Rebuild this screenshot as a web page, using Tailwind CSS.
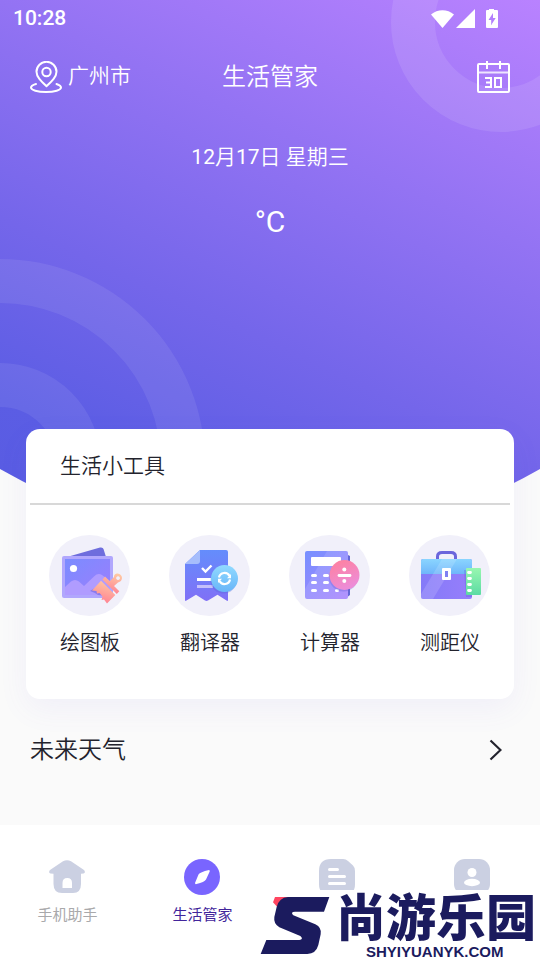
<!DOCTYPE html>
<html lang="zh-CN">
<head>
    <meta charset="UTF-8">
    <meta name="viewport" content="width=device-width, initial-scale=1.0">
    <title>生活管家</title>
    <script src="https://cdn.jsdelivr.net/npm/@tailwindcss/browser@4"></script>
</head>
<body class="relative flex flex-col min-h-screen bg-[#fafafa] font-[Roboto,'Noto_Sans_CJK_SC',sans-serif] font-[350] text-[#23232d]">

    <!-- Hero background -->
    <svg class="absolute inset-x-0 top-0 -z-0 w-full h-[546px]" viewBox="0 0 540 546" preserveAspectRatio="none" aria-hidden="true">
        <defs>
            <linearGradient id="sky" gradientUnits="userSpaceOnUse" x1="540" y1="0" x2="266" y2="592">
                <stop offset="0" stop-color="#b982ff"/>
                <stop offset=".35" stop-color="#9373f3"/>
                <stop offset=".65" stop-color="#7466ea"/>
                <stop offset=".9" stop-color="#5b5de4"/>
                <stop offset="1" stop-color="#595ce3"/>
            </linearGradient>
            <clipPath id="dome"><path d="M0 0H540V469Q270 622 0 469Z"/></clipPath>
        </defs>
        <g clip-path="url(#dome)">
            <rect width="540" height="546" fill="url(#sky)"/>
            <g fill="none" stroke="#fff" stroke-width="44">
                <circle cx="501" cy="22" r="88" stroke-opacity=".1"/>
                <circle cx="0" cy="464" r="183" stroke-opacity=".08"/>
                <circle cx="0" cy="464" r="79" stroke-opacity=".08"/>
            </g>
        </g>
    </svg>

    <div class="relative flex flex-col flex-1">
        <!-- Status bar -->
        <div class="flex items-center justify-between h-[37px] pl-[13px] pr-[42px] text-white">
            <span class="text-[21px] font-medium">10:28</span>
            <svg class="w-[68px] h-5" viewBox="0 0 68 20" fill="#fff" aria-hidden="true">
                <path d="M1 5.500C7.500-.3 17.500-.3 24 5.500L12.500 19Z"/>
                <path d="M45 0V19H26Z"/>
                <path fill-rule="evenodd" d="M59-1h5v2h3q1 0 1 1v16q0 1-1 1H57q-1 0-1-1V2q0-1 1-1h2ZM63 4l-4.500 7h2.700v5l4.500-7H63Z"/>
            </svg>
        </div>

        <!-- Header -->
        <header class="grid grid-cols-3 items-center h-20 px-[30px] text-white">
            <button type="button" class="flex items-center gap-1.5 text-[21px]">
                <svg class="w-8 h-8 shrink-0" viewBox="0 0 32 32" fill="none" stroke="#fff" stroke-width="2" stroke-linecap="round" aria-hidden="true">
                    <path d="M16.500 25.200C11 20 6.500 15.800 6.500 10.800a10 10 0 0 1 20 0C26.500 15.800 22 20 16.500 25.200Z" stroke-linejoin="round"/>
                    <circle cx="16.500" cy="11" r="4.200"/>
                    <path d="M6 23C2.500 24 1 25 1 26.500 1 29 7.500 31 16 31s15-2 15-4.500C31 25 29.500 24 26.500 23"/>
                </svg>
                广州市
            </button>
            <h1 class="text-2xl text-center">生活管家</h1>
            <button type="button" class="justify-self-end" aria-label="日历">
                <svg class="w-[34px] h-[34px]" viewBox="0 0 34 34" fill="none" stroke="#fff" stroke-width="2" aria-hidden="true">
                    <rect x="2" y="4" width="31" height="28" rx="1"/>
                    <path d="M2 12.500H33" stroke-opacity=".8"/>
                    <path d="M11 1V9M24 1V9"/>
                    <path d="M9 18H15V27H9M10 22.500H15M19 18H25V27H19Z"/>
                </svg>
            </button>
        </header>

        <p class="mt-[25px] text-[21px] leading-[30px] text-center text-white"><span class="font-normal">12</span>月<span class="font-normal">17</span>日 星期三</p>
        <p class="mt-[30px] text-[30px] leading-10 text-center text-white font-normal">°C</p>

        <!-- Tools card -->
        <section class="mt-[187px] mx-[26px] px-1 pb-[42px] rounded-[14px] bg-white shadow-[0_10px_30px_rgba(110,100,230,0.07)]">
            <h2 class="h-[76px] pl-[30px] border-b-2 border-[#d8d8d8] text-[21px] leading-[74px]">生活小工具</h2>
            <div class="grid grid-cols-4 pt-[30px] text-xl">
                <a href="#" class="flex flex-col items-center gap-3">
                    <svg class="w-[82px] h-[82px]" viewBox="19 15 82 82" aria-hidden="true">
                        <defs>
                            <linearGradient id="photo" x1="0" y1="0" x2="1" y2="1"><stop stop-color="#7b8cff"/><stop offset="1" stop-color="#9c7dfd"/></linearGradient>
                            <linearGradient id="brush" x1=".7" y1="0" x2=".4" y2="1"><stop stop-color="#ffc9a3"/><stop offset="1" stop-color="#ff7f92"/></linearGradient>
                        </defs>
                        <circle cx="59.500" cy="55.500" r="40.500" fill="#f1f0fa"/>
                        <path d="M37 37 70 27.500Q73 27 73.500 29L76 37Z" fill="#6e6ddd"/>
                        <rect x="32" y="36" width="51" height="42" rx="2" fill="#b1a7fd"/>
                        <rect x="35" y="39" width="45" height="36" fill="url(#photo)"/>
                        <path d="M35 67 41 61.500Q45 58.500 49 61.500L54 66 64 56.500Q68 52.500 72 55L80 61V75H35Z" fill="#b09cff"/>
                        <circle cx="43.500" cy="48.500" r="3.600" fill="#fff"/>
                        <path d="M60 71 68 66 75 76 68 75 65 73Z" fill="#6b61db" opacity=".55"/>
                        <g fill="url(#brush)">
                            <path fill-rule="evenodd" d="M75 56.500 79.800 61.200 84 57Q84 53.500 87.500 53.500 91.800 54 92 58 91.800 61.500 88 62.500L84 66 89.300 71.300 86.800 74 72.500 59.500ZM88 56.200a1.900 1.900 0 1 0 .1 0Z"/>
                            <path d="M71 60.800 85.300 75 77 83.500 74 79.500 71.500 80 72.500 76.500 69.500 73 67 73.500 66.500 71 62 70.500Z"/>
                        </g>
                    </svg>
                    <span>绘图板</span>
                </a>
                <a href="#" class="flex flex-col items-center gap-3">
                    <svg class="w-[82px] h-[82px]" viewBox="19 15 82 82" aria-hidden="true">
                        <defs>
                            <linearGradient id="doc" x1="0" y1="0" x2="0" y2="1"><stop stop-color="#648dfc"/><stop offset="1" stop-color="#8070f6"/></linearGradient>
                            <linearGradient id="sync" x1="0" y1="0" x2="0" y2="1"><stop stop-color="#91daff"/><stop offset="1" stop-color="#68b5f8"/></linearGradient>
                        </defs>
                        <circle cx="59.500" cy="55.500" r="40.500" fill="#f1f0fa"/>
                        <path d="M50 30H76Q78 30 78 32V80Q78 81.500 76.500 80.500L67.500 74.800 58 80.500Q56.500 81.300 55 80.500L46 74.800 36.500 80.600Q35 81.500 35 80V44Z" fill="url(#doc)"/>
                        <path d="M50 30V41Q50 44 47 44H35Z" fill="#a6bdfc"/>
                        <path d="M52 48 55.500 51.500 61.500 45.500" fill="none" stroke="#fff" stroke-width="2.400"/>
                        <path d="M47 59.500H63" stroke="#fff" stroke-width="3"/>
                        <path d="M47 66.500H63" stroke="#c5c0fb" stroke-width="3"/>
                        <circle cx="73.500" cy="60.500" r="13" fill="#5863d8" opacity=".35"/>
                        <circle cx="74.500" cy="58.500" r="13.500" fill="url(#sync)"/>
                        <g fill="none" stroke="#fff" stroke-width="2.200">
                            <path d="M69 57.500A5.600 5.600 0 0 1 79.500 56M80 59.500A5.600 5.600 0 0 1 69.500 61"/>
                        </g>
                        <path d="M81 54V58.200H77ZM68 63V58.800H72Z" fill="#fff"/>
                    </svg>
                    <span>翻译器</span>
                </a>
                <a href="#" class="flex flex-col items-center gap-3">
                    <svg class="w-[82px] h-[82px]" viewBox="19 15 82 82" aria-hidden="true">
                        <defs>
                            <linearGradient id="calc" x1="0" y1="0" x2=".8" y2="1"><stop stop-color="#7690ff"/><stop offset="1" stop-color="#a585fd"/></linearGradient>
                            <linearGradient id="divide" x1="0" y1="0" x2=".4" y2="1"><stop stop-color="#ff809b"/><stop offset="1" stop-color="#ed8cd7"/></linearGradient>
                        </defs>
                        <circle cx="59.500" cy="55.500" r="40.500" fill="#f1f0fa"/>
                        <path d="M76 34 80 36V75L76 78Z" fill="#6467d5"/>
                        <rect x="35" y="31" width="43" height="48" rx="2" fill="url(#calc)"/>
                        <path d="M57 31H76Q78 31 78 33V79H35V69Z" fill="#fff" opacity=".12"/>
                        <rect x="41" y="37" width="30" height="9" rx="1" fill="#fff"/>
                        <g stroke="#fff" stroke-width="3" stroke-linecap="round">
                            <path d="M42.500 55.500H45.500M54.500 55.500H57.500M42.500 62.500H45.500M54.500 62.500H57.500M42.500 70.500H45.500M54.500 70.500H57.500M66.500 70.500H67.500"/>
                        </g>
                        <circle cx="73.500" cy="57" r="14.500" fill="#6e62d8" opacity=".35"/>
                        <circle cx="74.500" cy="55" r="15" fill="url(#divide)"/>
                        <path d="M69 55.500H80" stroke="#fff" stroke-width="2.800" stroke-linecap="round"/>
                        <circle cx="74.300" cy="49.500" r="2" fill="#fff"/>
                        <circle cx="74.300" cy="61" r="2" fill="#fff"/>
                    </svg>
                    <span>计算器</span>
                </a>
                <a href="#" class="flex flex-col items-center gap-3">
                    <svg class="w-[82px] h-[82px]" viewBox="19 15 82 82" aria-hidden="true">
                        <defs>
                            <linearGradient id="lid" x1="0" y1="0" x2="0" y2="1"><stop stop-color="#8ad5ff"/><stop offset="1" stop-color="#6fb5fa"/></linearGradient>
                            <linearGradient id="case" x1="0" y1="0" x2="1" y2="0"><stop stop-color="#847af8"/><stop offset="1" stop-color="#977efb"/></linearGradient>
                            <linearGradient id="ruler" x1="0" y1="0" x2="0" y2="1"><stop stop-color="#98f7b0"/><stop offset="1" stop-color="#5cdba3"/></linearGradient>
                            <clipPath id="bag"><rect x="31" y="39" width="51" height="40" rx="2"/></clipPath>
                        </defs>
                        <circle cx="59.500" cy="55.500" r="40.500" fill="#f1f0fa"/>
                        <path d="M47.500 40V36.500Q47.500 32.500 52 32.500H61Q65.500 32.500 65.500 36.500V40" fill="none" stroke="#6b66dc" stroke-width="3"/>
                        <g clip-path="url(#bag)">
                            <rect x="31" y="39" width="51" height="40" fill="url(#case)"/>
                            <rect x="31" y="39" width="51" height="15" fill="url(#lid)"/>
                            <path d="M52 39H67L43 79H31V74Z" fill="#fff" opacity=".15"/>
                            <path d="M74 50H82V77H76Z" fill="#5c5bd0" opacity=".3"/>
                        </g>
                        <rect x="52" y="48" width="9" height="12" rx="1" fill="#fff"/>
                        <rect x="55" y="51" width="3" height="6" fill="#7f80f2"/>
                        <rect x="76" y="48" width="15" height="27" rx="1" fill="url(#ruler)"/>
                        <path d="M78.500 52.500H80.500M78.500 58.500H80.500M78.500 64.500H80.500M78.500 70.500H80.500" stroke="#fff" stroke-width="2.800" stroke-linecap="round"/>
                    </svg>
                    <span>测距仪</span>
                </a>
            </div>
        </section>

        <!-- Forecast -->
        <a href="#" class="flex items-center justify-between mt-[33px] mb-auto pl-[30px] pr-[38px] text-2xl leading-9">
            未来天气
            <svg class="w-[13px] h-[22px]" viewBox="0 0 13 22" fill="none" stroke="#23232d" stroke-width="2.200" aria-hidden="true">
                <path d="M1.500 1.500 11.500 11 1.500 20.500"/>
            </svg>
        </a>

        <!-- Bottom navigation -->
        <nav class="relative grid grid-cols-4 h-[135px] pt-[34px] bg-white text-[15px] leading-6 font-normal text-[#a9a9ab]">
            <a href="#" class="flex flex-col items-center gap-2">
                <svg class="w-[37px] h-9" viewBox="0 0 37 36" fill="#cbd0e2" aria-hidden="true">
                    <path fill-rule="evenodd" d="M14 2.300Q18 0 22 2.300L35 11Q37 13.500 34.500 14.500L32 14.800V25Q32 34 24 34H13Q4.500 34 4.500 25V14.800L1.500 14.500Q-1 13.500 1 11ZM13.500 29H23V24Q23 19 18.300 19 13.500 19 13.500 24Z"/>
                </svg>
                <span>手机助手</span>
            </a>
            <a href="#" class="flex flex-col items-center gap-2 text-[#42259b]" aria-current="page">
                <svg class="w-[37px] h-9" viewBox="0 0 37 36" aria-hidden="true">
                    <circle cx="18" cy="18" r="18" fill="#7965ff"/>
                    <path d="M25 11Q26 11 25.700 12.500L22 20.500Q20.500 23 12.500 25 11 25.500 11 24L14.500 15.500Q16 13 25 11Z" fill="#fff"/>
                </svg>
                <span>生活管家</span>
            </a>
            <a href="#" class="flex flex-col items-center" aria-label="资讯">
                <svg class="w-[37px] h-9" viewBox="0 0 37 36" aria-hidden="true">
                    <path d="M12 0H24Q27 0 29 2L34 6.500Q36 8.500 36 12V25Q36 36 25 36H11Q0 36 0 25V12Q0 0 12 0Z" fill="#cbd0e2"/>
                    <path d="M10.500 10.500H18.500M10.500 17.500H25.500M10.500 24.500H25.500" stroke="#fff" stroke-width="3" stroke-linecap="round"/>
                </svg>
            </a>
            <a href="#" class="flex flex-col items-center" aria-label="我的">
                <svg class="w-[37px] h-9" viewBox="0 0 37 36" aria-hidden="true">
                    <rect width="36" height="36" rx="11" fill="#cbd0e2"/>
                    <circle cx="18" cy="13.500" r="4.500" fill="#fff"/>
                    <ellipse cx="18" cy="23.500" rx="8" ry="3.700" fill="#fff"/>
                </svg>
            </a>

            <!-- Site badge -->
            <div class="absolute right-0 bottom-0 flex gap-1.5 h-[70px] pt-[5px] bg-white text-[#1b1b5e]">
                <svg class="w-[70px] h-[60px]" viewBox="30 150 210 180" aria-hidden="true">
                    <path d="M75 156H125L84 188 69 172Z" fill="#ff4560"/>
                    <path d="M114 156H238L222 200H135Q120 201 130 211L196 238Q216 248 212 268L205 300Q198 326 172 327H32L49 285H148Q162 282 151 273L88 247Q70 236 73 216L80 186Q88 157 114 156Z" fill="#1b1b5e"/>
                </svg>
                <div class="w-[204px] whitespace-nowrap">
                    <p class="text-[50px] leading-[48px] font-black">尚游乐园</p>
                    <p class="pl-[30px] font-['Liberation_Sans',sans-serif] text-[15px] leading-[17px] font-bold">SHYIYUANYK.COM</p>
                </div>
            </div>
        </nav>
    </div>
</body>
</html>
